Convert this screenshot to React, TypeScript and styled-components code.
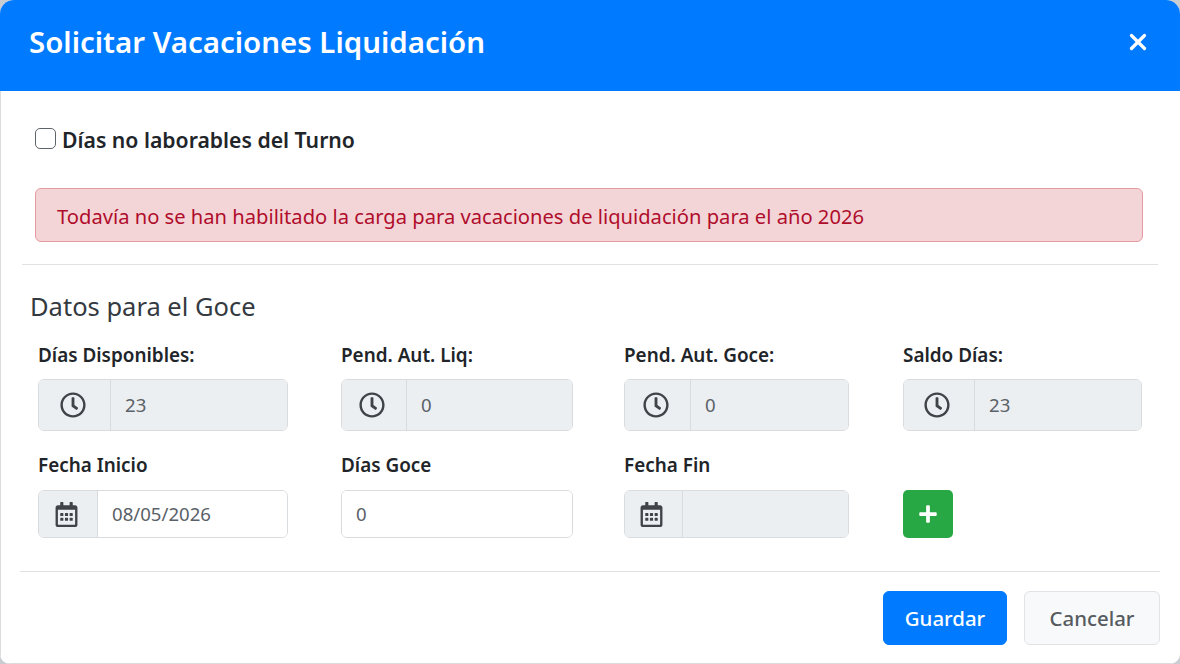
import React from 'react';
import styled, { createGlobalStyle } from 'styled-components';
import { FaPlus, FaRegCalendarAlt, FaRegClock } from 'react-icons/fa';
import { X } from 'lucide-react';

const GlobalStyle = createGlobalStyle`
  * {
    box-sizing: border-box;
  }
  html,
  body {
    margin: 0;
    height: 664px;
    overflow: hidden;
    background: #c9ccd0;
    font-family: 'Noto Sans', 'Open Sans', sans-serif;
  }
`;

const Modal = styled.div`
  width: 1180px;
  height: 664px;
  background: #fff;
  border-radius: 14px 14px 10px 10px;
  overflow: hidden;
  display: flex;
  flex-direction: column;
`;

const Header = styled.header`
  height: 91px;
  flex: none;
  background: #007bff;
  color: #fff;
  display: flex;
  align-items: center;
  justify-content: space-between;
  padding: 0 29px 7px 29px;
`;

const Title = styled.h1`
  margin: 0;
  font-size: 29.45px;
  font-weight: 600;
`;

const CloseButton = styled.button`
  border: 0;
  padding: 0;
  background: none;
  color: #fff;
  display: flex;
`;

const Body = styled.div`
  flex: 1;
  display: flex;
  flex-direction: column;
  padding: 37px 22px 0;
  box-shadow: inset 1px -1px 0 #d9dbdd;
`;

const CheckRow = styled.label`
  display: flex;
  align-items: center;
  gap: 6px;
  height: 24px;
  margin-left: 13px;
  padding-bottom: 2px;
  font-size: 21.2px;
  font-weight: 600;
  color: #212529;
`;

const CheckBox = styled.input`
  appearance: none;
  width: 21px;
  height: 21px;
  margin: 0 0 1px;
  background: #fff;
  border: 1.5px solid #5f6468;
  border-radius: 5px;
`;

const Alert = styled.div`
  height: 54px;
  margin: 36px 15px 0 13px;
  padding: 2px 22px 0 21px;
  display: flex;
  align-items: center;
  background: #f4d5d7;
  border: 1px solid #e59aa2;
  border-radius: 6px;
  color: #b00d2c;
  font-size: 20.17px;
`;

const Divider = styled.hr`
  margin: 22px 0 0;
  border: 0;
  border-top: 1px solid #dfe1e3;
`;

const SectionTitle = styled.h2`
  margin: 23px 0 0 8px;
  height: 37px;
  font-size: 25.5px;
  line-height: 37px;
  font-weight: 400;
  color: #343a40;
`;

const FieldGrid = styled.div<{ $top: number }>`
  display: grid;
  grid-template-columns: 303px 283px 279px 239px;
  margin: ${({ $top }) => $top}px 0 0 16px;
`;

const Field = styled.div<{ $gap?: number }>`
  display: flex;
  flex-direction: column;
  padding-right: ${({ $gap }) => $gap ?? 0}px;
`;

const Label = styled.div<{ $below: number }>`
  height: 26px;
  line-height: 26px;
  font-size: 18.9px;
  font-weight: 600;
  color: #212529;
  margin-bottom: ${({ $below }) => $below}px;
`;

const InputGroup = styled.div<{ $height: number }>`
  display: flex;
  height: ${({ $height }) => $height}px;
  border: 1.5px solid #d9dcde;
  border-radius: 6px;
  overflow: hidden;
  background: #fff;
`;

const Addon = styled.span<{ $width: number }>`
  flex: none;
  width: ${({ $width }) => $width}px;
  padding-right: 4px;
  display: flex;
  align-items: center;
  justify-content: center;
  background: #eceff1;
  border-right: 1.5px solid #d9dcde;
  color: #3f4449;
`;

const Input = styled.input<{ $disabled?: boolean }>`
  flex: 1;
  min-width: 0;
  border: 0;
  outline: 0;
  padding: 0 14px 2px;
  font: inherit;
  font-size: 18.6px;
  color: #5a6168;
  background: ${({ $disabled }) => ($disabled ? '#eceff1' : '#fff')};
`;

const AddButton = styled.button`
  width: 50px;
  height: 48px;
  border: 0;
  border-radius: 5px;
  background: #28a745;
  color: #fff;
  display: flex;
  align-items: center;
  justify-content: center;
  svg {
    width: 20px;
    height: 20px;
  }
`;

const FooterDivider = styled(Divider)`
  margin: 33px -2px 0;
`;

const Footer = styled.div`
  display: flex;
  justify-content: flex-end;
  gap: 17px;
  margin: 19px -2px 0 0;
`;

const Button = styled.button<{ $primary?: boolean }>`
  height: 54px;
  border-radius: 6px;
  font: inherit;
  font-size: 20.4px;
  font-weight: 500;
  width: ${({ $primary }) => ($primary ? '124px' : '136px')};
  color: ${({ $primary }) => ($primary ? '#fff' : '#565b60')};
  background: ${({ $primary }) => ($primary ? '#007bff' : '#f8f9fa')};
  border: 1px solid ${({ $primary }) => ($primary ? '#007bff' : '#e1e3e6')};
`;

const balances = [
  { label: 'Días Disponibles:', value: '23', addon: 72, gap: 53 },
  { label: 'Pend. Aut. Liq:', value: '0', addon: 65, gap: 51 },
  { label: 'Pend. Aut. Goce:', value: '0', addon: 66, gap: 54 },
  { label: 'Saldo Días:', value: '23', addon: 71, gap: 0 }
];

const App: React.FC = () => (
  <>
    <GlobalStyle />
    <Modal>
      <Header>
        <Title>Solicitar Vacaciones Liquidación</Title>
        <CloseButton>
          <X size={26} strokeWidth={3} />
        </CloseButton>
      </Header>
      <Body>
        <CheckRow>
          <CheckBox type="checkbox" />
          Días no laborables del Turno
        </CheckRow>
        <Alert>Todavía no se han habilitado la carga para vacaciones de liquidación para el año 2026</Alert>
        <Divider />
        <SectionTitle>Datos para el Goce</SectionTitle>
        <FieldGrid $top={17}>
          {balances.map((item) => (
            <Field key={item.label} $gap={item.gap}>
              <Label $below={11}>{item.label}</Label>
              <InputGroup $height={52}>
                <Addon $width={item.addon}>
                  <FaRegClock size={26} />
                </Addon>
                <Input $disabled readOnly value={item.value} />
              </InputGroup>
            </Field>
          ))}
        </FieldGrid>
        <FieldGrid $top={21}>
          <Field $gap={53}>
            <Label $below={12}>Fecha Inicio</Label>
            <InputGroup $height={48}>
              <Addon $width={59}>
                <FaRegCalendarAlt size={25} />
              </Addon>
              <Input readOnly value="08/05/2026" />
            </InputGroup>
          </Field>
          <Field $gap={51}>
            <Label $below={12}>Días Goce</Label>
            <InputGroup $height={48}>
              <Input readOnly value="0" />
            </InputGroup>
          </Field>
          <Field $gap={54}>
            <Label $below={12}>Fecha Fin</Label>
            <InputGroup $height={48}>
              <Addon $width={58}>
                <FaRegCalendarAlt size={25} />
              </Addon>
              <Input $disabled readOnly value="" />
            </InputGroup>
          </Field>
          <Field>
            <Label $below={12} />
            <AddButton>
              <FaPlus />
            </AddButton>
          </Field>
        </FieldGrid>
        <FooterDivider />
        <Footer>
          <Button $primary>Guardar</Button>
          <Button>Cancelar</Button>
        </Footer>
      </Body>
    </Modal>
  </>
);

export default App;
